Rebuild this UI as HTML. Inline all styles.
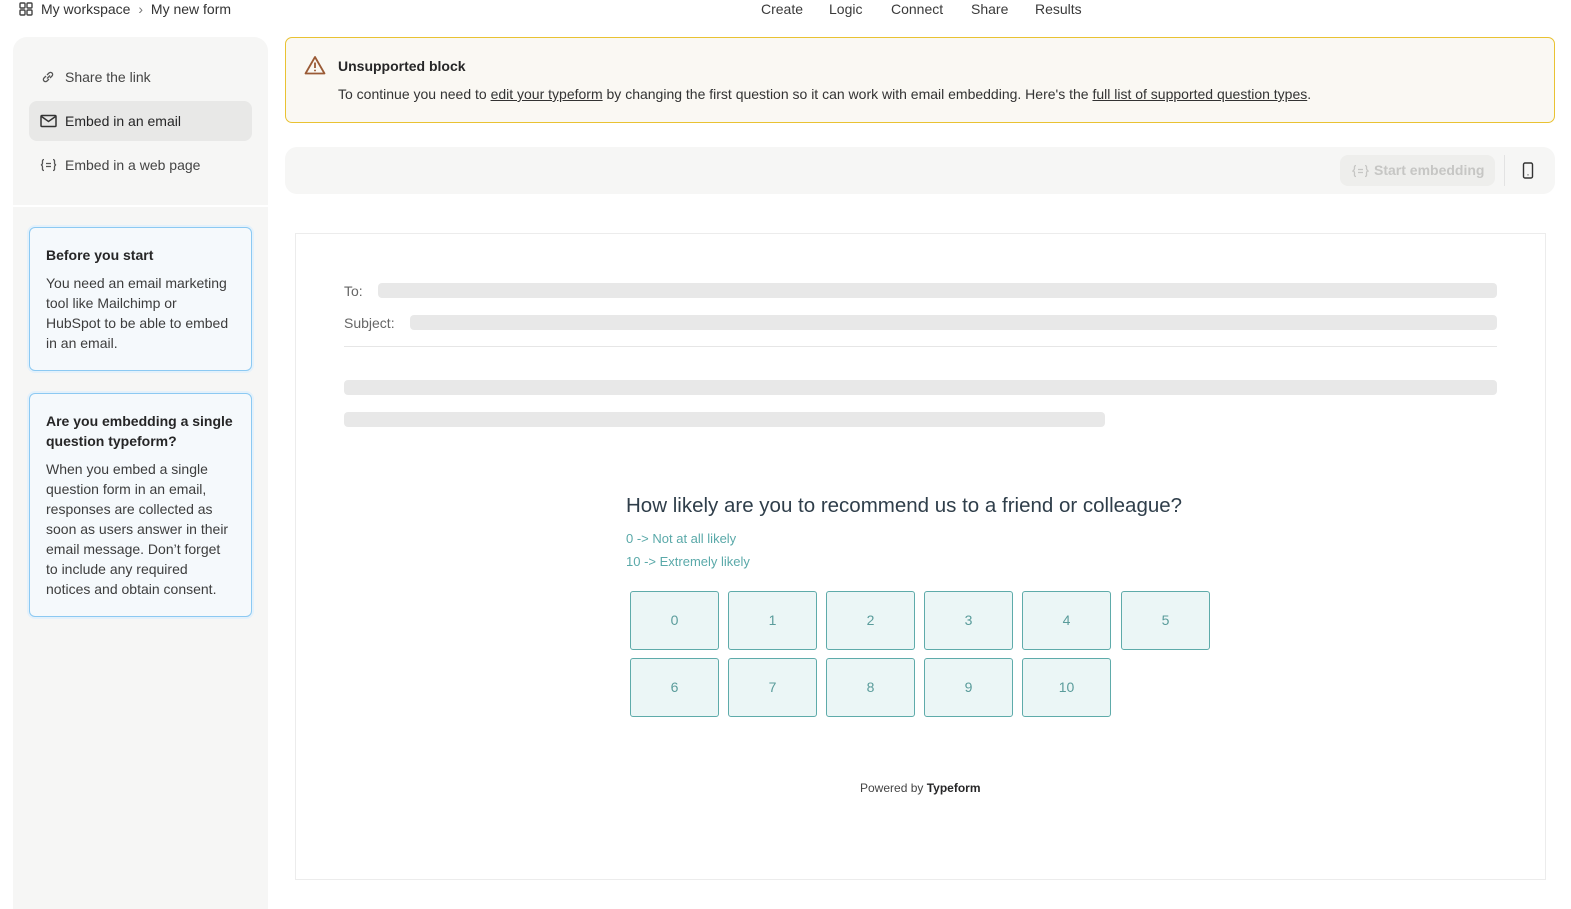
<!DOCTYPE html>
<html><head><meta charset="utf-8"><style>
*{box-sizing:border-box;margin:0;padding:0}
html,body{width:1571px;height:909px;overflow:hidden}
body{background:#fff;font-family:"Liberation Sans",sans-serif;color:#262627;position:relative;font-size:14px}
.a{position:absolute}
.top{top:0;height:20px;font-size:14px;color:#333}
.nav span{position:absolute;top:1px;font-size:14px;color:#3a3a3a}
.side{left:13px;top:37px;width:255px;height:168px;background:#f6f6f5;border-radius:14px 14px 0 0}
.side2{left:13px;top:207px;width:255px;height:702px;background:#f6f6f5}
.item{position:absolute;left:16px;width:223px;height:40px;border-radius:8px;font-size:14px;color:#444;line-height:40px;padding-left:36px}
.item svg{position:absolute;left:11px;top:12px}
.card{position:absolute;left:16px;width:223px;background:#f5f9fc;border:1px solid #8cc9f2;border-radius:6px;padding:17px 18px 17px 16px;font-size:14px;line-height:20px;color:#3d3d3d;box-shadow:0 0 0 2px #e4f1fb}
.card b{display:block;color:#262627;font-size:14px;margin-bottom:8px}
.ban{left:285px;top:37px;width:1270px;height:86px;background:#faf8f3;border:1px solid #e9c232;border-radius:7px}
.bar{left:285px;top:147px;width:1270px;height:47px;background:#f6f6f5;border-radius:12px}
.pv{left:295px;top:233px;width:1251px;height:647px;border:1px solid #ececec}
.ph{position:absolute;background:#e8e8e8;border-radius:4px;height:15px}
.btn{position:absolute;width:89px;height:59px;background:#ebf6f6;border:1px solid #5eabaa;border-radius:3px;color:#5a9c9b;font-size:14px;text-align:center;line-height:57px}
</style></head><body>
<div class="a top" style="left:19px;top:1px">
<svg width="14" height="14" viewBox="0 0 14 14" style="position:absolute;left:0;top:1px" fill="none" stroke="#444" stroke-width="1.4"><rect x="1" y="1" width="5" height="5" rx="1"/><rect x="8" y="1" width="5" height="5" rx="1"/><rect x="1" y="8" width="5" height="5" rx="1"/><rect x="8" y="8" width="5" height="5" rx="1"/></svg>
<span style="position:absolute;left:22px;white-space:nowrap">My workspace <span style="color:#777;margin:0 4px">›</span> My new form</span></div>
<div class="nav"><span style="left:761px">Create</span><span style="left:829px">Logic</span><span style="left:891px">Connect</span><span style="left:971px">Share</span><span style="left:1035px">Results</span></div>

<div class="a side">
<div class="item" style="top:20px"><svg width="16" height="16" viewBox="0 0 16 16" fill="none" stroke="#555" stroke-width="1.3"><path d="M7 9.5l3-3M6 7l-2 2a2 2 0 003 3l2-2M10 9l2-2a2 2 0 00-3-3L7 6"/></svg>Share the link</div>
<div class="item" style="top:64px;background:#e8e8e7;color:#262627"><svg width="17" height="16" viewBox="0 0 17 16" fill="none" stroke="#333" stroke-width="1.5"><rect x="1" y="2.5" width="15" height="11" rx="1"/><path d="M1.5 3.5l7 5 7-5"/></svg>Embed in an email</div>
<div class="item" style="top:108px"><svg width="17" height="16" viewBox="0 0 17 16" fill="none" stroke="#555" stroke-width="1.3"><path d="M4 2.5c-2 0-1.5 2-1.5 3.5S1 8 1 8s1.5 0 1.5 2-.5 3.5 1.5 3.5M13 2.5c2 0 1.5 2 1.5 3.5S16 8 16 8s-1.5 0-1.5 2 .5 3.5-1.5 3.5M6 6.5h5M6 9.5h5"/></svg>Embed in a web page</div>
</div>
<div class="a side2">
<div class="card" style="top:20px;height:144px"><b>Before you start</b>You need an email marketing tool like Mailchimp or HubSpot to be able to embed in an email.</div>
<div class="card" style="top:186px;height:224px"><b style="line-height:20px">Are you embedding a single question typeform?</b>When you embed a single question form in an email, responses are collected as soon as users answer in their email message. Don’t forget to include any required notices and obtain consent.</div>
</div>

<div class="a ban">
<svg class="a" style="left:18px;top:17px" width="22" height="20" viewBox="0 0 22 20" fill="none" stroke="#9a5a35" stroke-width="1.8"><path d="M11 2L1.5 18.5h19z" stroke-linejoin="round"/><path d="M11 7.5v5.5M11 14.8v1.4"/></svg>
<div class="a" style="left:52px;top:20px;font-weight:bold;font-size:14px">Unsupported block</div>
<div class="a" style="left:52px;top:48px;font-size:14px;color:#333;white-space:nowrap">To continue you need to <u>edit your typeform</u> by changing the first question so it can work with email embedding. Here's the <u>full list of supported question types</u>.</div>
</div>

<div class="a bar">
<div class="a" style="left:1055px;top:8px;width:155px;height:31px;background:#eeeeec;border-radius:8px;color:#c6c6c4;font-size:14px;font-weight:bold;line-height:31px;padding-left:34px">Start embedding
<svg class="a" style="left:12px;top:9px" width="17" height="14" viewBox="0 0 17 14" fill="none" stroke="#c6c6c4" stroke-width="1.3"><path d="M4 1.5c-2 0-1.5 2-1.5 3S1 7 1 7s1.5 0 1.5 2-.5 3.5 1.5 3.5M13 1.5c2 0 1.5 2 1.5 3S16 7 16 7s-1.5 0-1.5 2 .5 3.5-1.5 3.5M6 5.5h5M6 8.5h5"/></svg></div>
<div class="a" style="left:1219px;top:8px;width:1px;height:31px;background:#e3e3e3"></div>
<svg class="a" style="left:1237px;top:15px" width="12" height="17" viewBox="0 0 12 17" fill="none" stroke="#333" stroke-width="1.4"><rect x="1.5" y="1" width="9" height="15" rx="1.5"/><path d="M6 12.5v.8"/></svg>
</div>

<div class="a pv">
<div class="a" style="left:48px;top:49px;color:#666;font-size:14px">To:</div>
<div class="ph" style="left:82px;top:49px;width:1119px"></div>
<div class="a" style="left:48px;top:81px;color:#666;font-size:14px">Subject:</div>
<div class="ph" style="left:114px;top:81px;width:1087px"></div>
<div class="a" style="left:48px;top:112px;width:1153px;height:1px;background:#e6e6e6"></div>
<div class="ph" style="left:48px;top:146px;width:1153px"></div>
<div class="ph" style="left:48px;top:178px;width:761px"></div>
<div class="a" style="left:330px;top:260px;color:#2f3e4a;font-size:20.5px;white-space:nowrap">How likely are you to recommend us to a friend or colleague?</div>
<div class="a" style="left:330px;top:297px;color:#5aa9a9;font-size:13px">0 -&gt; Not at all likely</div>
<div class="a" style="left:330px;top:320px;color:#5aa9a9;font-size:13px">10 -&gt; Extremely likely</div>
<div class="btn" style="left:334px;top:357px">0</div>
<div class="btn" style="left:432px;top:357px">1</div>
<div class="btn" style="left:530px;top:357px">2</div>
<div class="btn" style="left:628px;top:357px">3</div>
<div class="btn" style="left:726px;top:357px">4</div>
<div class="btn" style="left:825px;top:357px">5</div>
<div class="btn" style="left:334px;top:424px">6</div>
<div class="btn" style="left:432px;top:424px">7</div>
<div class="btn" style="left:530px;top:424px">8</div>
<div class="btn" style="left:628px;top:424px">9</div>
<div class="btn" style="left:726px;top:424px">10</div>
<div class="a" style="left:564px;top:547px;font-size:12px;color:#444">Powered by <b style="color:#262627">Typeform</b></div>
</div>
</body></html>
